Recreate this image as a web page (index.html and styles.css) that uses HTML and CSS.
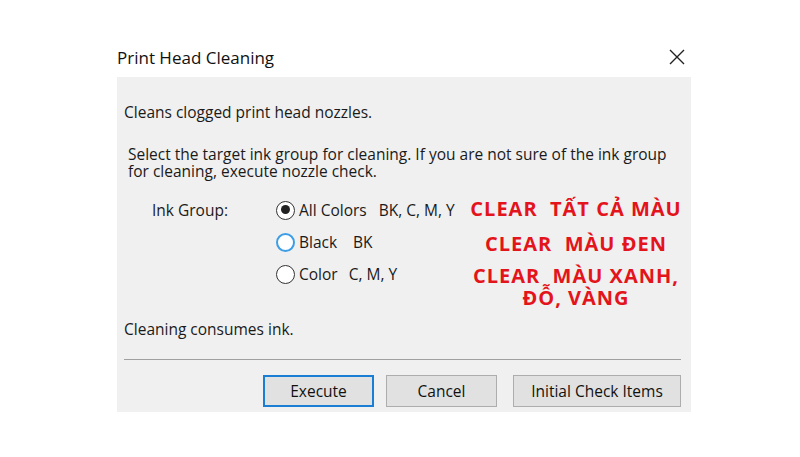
FILE: index.html
```html
<!DOCTYPE html>
<html>
<head>
<meta charset="utf-8">
<link rel="stylesheet" href="styles.css">
</head>
<body>
<div class="dialog">
  <div class="titlebar">
    <span class="title">Print Head Cleaning</span>
    <svg class="close" width="16" height="16" viewBox="0 0 16 16"><path d="M1 1 L15 15 M15 1 L1 15" stroke="#222" stroke-width="1.4" fill="none"/></svg>
  </div>
  <div class="panel">
    <p class="line first">Cleans clogged print head nozzles.</p>
    <p class="line para">Select the target ink group for cleaning. If you are not sure of the ink group<br>for cleaning, execute nozzle check.</p>
    <div class="group">
      <span class="glabel">Ink Group:</span>
      <div class="radios">
        <label class="radio"><span class="dot checked"></span><span class="rname">All Colors</span><span class="rcode c1">BK, C, M, Y</span></label>
        <label class="radio"><span class="dot focus"></span><span class="rname">Black</span><span class="rcode c2">BK</span></label>
        <label class="radio"><span class="dot"></span><span class="rname">Color</span><span class="rcode c3">C, M, Y</span></label>
      </div>
    </div>
    <div class="note">
      <div class="n1">CLEAR&nbsp; TẤT CẢ MÀU</div>
      <div class="n2">CLEAR&nbsp; MÀU ĐEN</div>
      <div class="n3">CLEAR&nbsp; MÀU XANH,<br>ĐỖ, VÀNG</div>
    </div>
    <p class="line consumes">Cleaning consumes ink.</p>
    <hr class="sep">
    <div class="buttons">
      <button class="btn default">Execute</button>
      <button class="btn">Cancel</button>
      <button class="btn wide">Initial Check Items</button>
    </div>
  </div>
</div>
</body>
</html>
```
FILE: styles.css
```css
* { box-sizing: border-box; }
html, body { margin: 0; padding: 0; background: #fff; }
body {
  width: 800px; height: 457px; overflow: hidden;
  font-family: "Open Sans", "Noto Sans", sans-serif;
  color: #1a1a1a;
}
.dialog {
  margin-left: 117px;
  width: 574px;
  padding-top: 43px;
}
.titlebar {
  display: flex;
  justify-content: space-between;
  align-items: center;
  height: 28px;
  margin-bottom: 6px;
}
.title { font-size: 17px; color: #111; }
.close { margin-right: 6px; }
.panel {
  position: relative;
  background: #f0f0f0;
  height: 335px;
  padding: 0 10px 0 7px;
}
.line {
  margin: 0;
  font-size: 15.5px;
  letter-spacing: 0;
  line-height: 17px;
}
.first { padding-top: 27px; }
.para { margin-top: 25px; padding-left: 4px; }
.group {
  display: flex;
  margin-top: 16px;
  padding-left: 28px;
}
.glabel {
  font-size: 15.5px;
  width: 124px; line-height: 28px;
}
.radios { display: flex; flex-direction: column; gap: 4px; }
.radio {
  display: flex; align-items: center; height: 28px;
  font-size: 15.5px;
}
.dot {
  width: 19px; height: 19px; border-radius: 50%;
  border: 1.5px solid #333; background: #fff;
  margin-right: 4px; position: relative; flex: none;
}
.dot.checked::after {
  content: ""; position: absolute; left: 3.5px; top: 3.5px;
  width: 9px; height: 9px; border-radius: 50%; background: #222;
}
.dot.focus { border-color: #3c9ee6; border-width: 2px; }
.rcode.c1 { margin-left: 12px; }
.rcode.c2 { margin-left: 16px; }
.rcode.c3 { margin-left: 11px; }
.note {
  position: absolute;
  left: 339px; top: 121px;
  width: 240px;
  color: #e3141b;
  font-family: "Open Sans", sans-serif;
  font-weight: 700;
  font-size: 20px;
  letter-spacing: 1px;
  text-align: center;
  line-height: 22px;
}
.n1 { height: 35px; }
.n2 { height: 32px; }
.consumes { margin-top: 33px; }
.sep {
  margin: 21px 0 0 0;
  border: 0; border-top: 1px solid #a0a0a0; height: 0;
}
.buttons {
  display: flex;
  justify-content: flex-end;
  gap: 12px;
  margin-top: 15px;
}
.btn {
  font-family: inherit;
  font-size: 15.5px;
  color: #111;
  background: #e1e1e1;
  border: 1px solid #adadad;
  height: 32px;
  width: 111px;
  padding: 0;
}
.btn.default { border: 2px solid #1a7fd4; }
.btn.wide { width: 168px; margin-left: 4px; }
```
